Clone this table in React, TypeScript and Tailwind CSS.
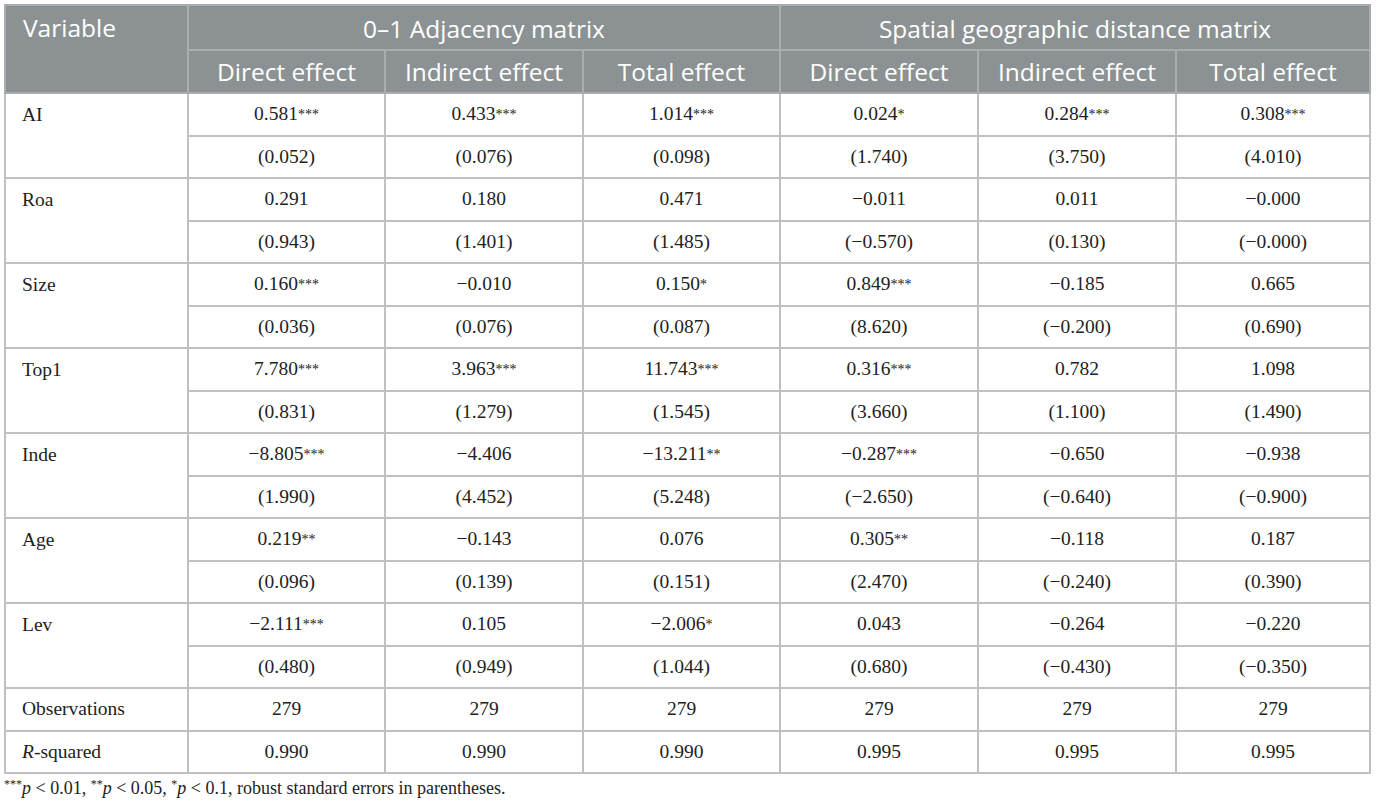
import React from "react";

type Cell = [string, string];
const rows: { name: React.ReactNode; a: Cell[]; b?: string[] }[] = [
  { name: "AI", a: [["0.581", "***"], ["0.433", "***"], ["1.014", "***"], ["0.024", "*"], ["0.284", "***"], ["0.308", "***"]], b: ["(0.052)", "(0.076)", "(0.098)", "(1.740)", "(3.750)", "(4.010)"] },
  { name: "Roa", a: [["0.291", ""], ["0.180", ""], ["0.471", ""], ["\u22120.011", ""], ["0.011", ""], ["\u22120.000", ""]], b: ["(0.943)", "(1.401)", "(1.485)", "(\u22120.570)", "(0.130)", "(\u22120.000)"] },
  { name: "Size", a: [["0.160", "***"], ["\u22120.010", ""], ["0.150", "*"], ["0.849", "***"], ["\u22120.185", ""], ["0.665", ""]], b: ["(0.036)", "(0.076)", "(0.087)", "(8.620)", "(\u22120.200)", "(0.690)"] },
  { name: "Top1", a: [["7.780", "***"], ["3.963", "***"], ["11.743", "***"], ["0.316", "***"], ["0.782", ""], ["1.098", ""]], b: ["(0.831)", "(1.279)", "(1.545)", "(3.660)", "(1.100)", "(1.490)"] },
  { name: "Inde", a: [["\u22128.805", "***"], ["\u22124.406", ""], ["\u221213.211", "**"], ["\u22120.287", "***"], ["\u22120.650", ""], ["\u22120.938", ""]], b: ["(1.990)", "(4.452)", "(5.248)", "(\u22122.650)", "(\u22120.640)", "(\u22120.900)"] },
  { name: "Age", a: [["0.219", "**"], ["\u22120.143", ""], ["0.076", ""], ["0.305", "**"], ["\u22120.118", ""], ["0.187", ""]], b: ["(0.096)", "(0.139)", "(0.151)", "(2.470)", "(\u22120.240)", "(0.390)"] },
  { name: "Lev", a: [["\u22122.111", "***"], ["0.105", ""], ["\u22122.006", "*"], ["0.043", ""], ["\u22120.264", ""], ["\u22120.220", ""]], b: ["(0.480)", "(0.949)", "(1.044)", "(0.680)", "(\u22120.430)", "(\u22120.350)"] },
  { name: "Observations", a: [["279", ""], ["279", ""], ["279", ""], ["279", ""], ["279", ""], ["279", ""]] },
  { name: <><i>R</i>-squared</>, a: [["0.990", ""], ["0.990", ""], ["0.990", ""], ["0.995", ""], ["0.995", ""], ["0.995", ""]] },
];

const td = "border-2 border-[#bfc1c1] h-[42.5px] p-0 text-center align-middle";
const th = "border-2 border-[#a9adae] h-[43px] p-0 font-normal";

export default function App() {
  return (
    <div className="bg-white w-[1377px] h-[807px] pt-[4px] pl-[4px] font-['Liberation_Serif',serif] text-[#222]">
      <table className="table-fixed border-collapse border-2 border-[#bfc1c1] text-[19.5px] leading-[24px] w-[1365px]">
        <colgroup>
          <col className="w-[183px]" />
          <col className="w-[197px]" />
          <col className="w-[198px]" />
          <col className="w-[197px]" />
          <col className="w-[198px]" />
          <col className="w-[198px]" />
          <col className="w-[194px]" />
        </colgroup>
        <thead className="bg-[#8c9293] text-white text-[24.5px] leading-[30px] font-['Open_Sans',sans-serif]">
          <tr>
            <th rowSpan={2} className={`${th} text-left pl-[17px] align-top pt-[7px]`}>Variable</th>
            <th colSpan={3} className={`${th} text-center h-[45px] pt-[3px]`}>0–1 Adjacency matrix</th>
            <th colSpan={3} className={`${th} text-center h-[45px] pt-[3px]`}>Spatial geographic distance matrix</th>
          </tr>
          <tr>
            {["Direct effect", "Indirect effect", "Total effect", "Direct effect", "Indirect effect", "Total effect"].map((t, i) => (
              <th key={i} className={`${th} text-center`}>{t}</th>
            ))}
          </tr>
        </thead>
        <tbody>
          {rows.map((r, ri) => (
            <React.Fragment key={ri}>
              <tr>
                <td rowSpan={r.b ? 2 : 1} className={`${td} text-left pl-[16px] ${r.b ? "align-top pt-[9px]" : ""}`}>
                  {r.name}
                </td>
                {r.a.map(([v, s], i) => (
                  <td key={i} className={td}>
                    {v}
                    {s && <sup className="text-[14px] relative top-[-1px]">{s}</sup>}
                  </td>
                ))}
              </tr>
              {r.b && (
                <tr>
                  {r.b.map((v, i) => (
                    <td key={i} className={td}>{v}</td>
                  ))}
                </tr>
              )}
            </React.Fragment>
          ))}
        </tbody>
      </table>
      <div className="mt-[2px] text-[18px] leading-[24px]">
        <sup className="text-[12px]">***</sup><i>p</i> &lt; 0.01, <sup className="text-[12px]">**</sup><i>p</i> &lt; 0.05, <sup className="text-[12px]">*</sup><i>p</i> &lt; 0.1, robust standard errors in parentheses.
      </div>
    </div>
  );
}
